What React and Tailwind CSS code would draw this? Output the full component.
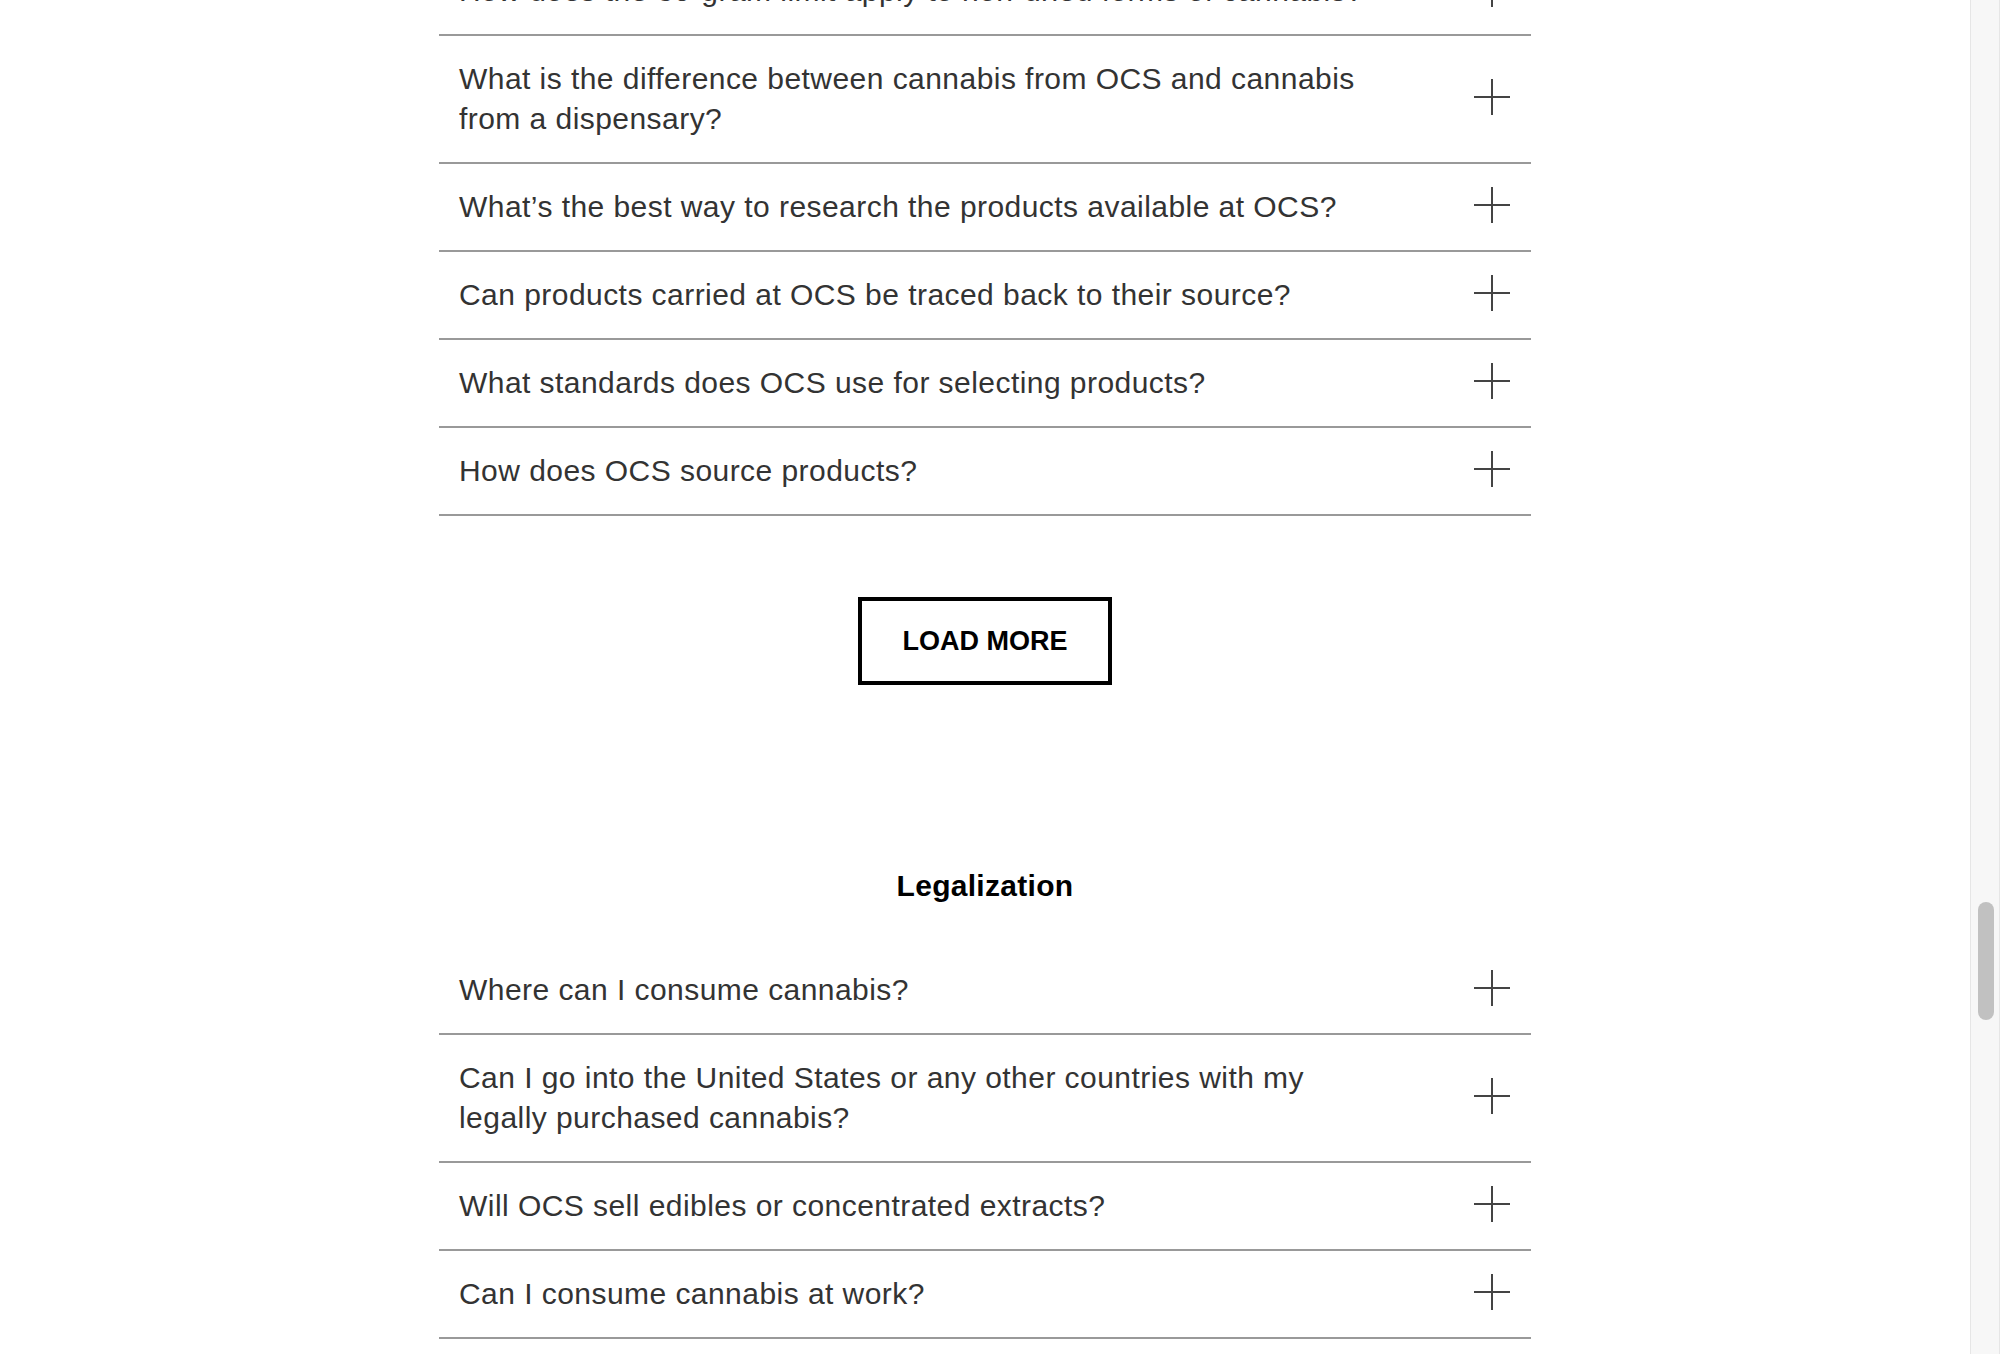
const firstGroup = [
  "How does the 30-gram limit apply to non-dried forms of cannabis?",
  "What is the difference between cannabis from OCS and cannabis from a dispensary?",
  "What\u2019s the best way to research the products available at OCS?",
  "Can products carried at OCS be traced back to their source?",
  "What standards does OCS use for selecting products?",
  "How does OCS source products?",
];

const legalization = [
  "Where can I consume cannabis?",
  "Can I go into the United States or any other countries with my legally purchased cannabis?",
  "Will OCS sell edibles or concentrated extracts?",
  "Can I consume cannabis at work?",
];

const PlusIcon = () => (
  <svg width="36" height="36" viewBox="0 0 36 36" className="shrink-0 -mt-[5px]">
    <line x1="0" y1="18" x2="36" y2="18" stroke="#444" strokeWidth="2" />
    <line x1="18" y1="0" x2="18" y2="36" stroke="#444" strokeWidth="2" />
  </svg>
);

const FaqRow = ({ question }) => (
  <div className="flex items-center justify-between border-b-2 border-[#999] pl-5 pr-[21px] py-[23px]">
    <p className="max-w-[910px] text-[30px] leading-[40px] tracking-[0.45px] text-[#333]">{question}</p>
    <PlusIcon />
  </div>
);

const App = () => {
  return (
    <div
      className="flex h-[1354px] w-full overflow-hidden bg-white"
      style={{ fontFamily: '"Liberation Sans", Arial, sans-serif' }}
    >
      <div className="flex-1">
        <div className="mx-auto w-[1092px]">
          {/* Products section (scrolled) */}
          <div className="-mt-[52px]">
            {firstGroup.map((q) => (
              <FaqRow key={q} question={q} />
            ))}
          </div>

          <div className="mt-[81px] flex justify-center">
            <button className="flex h-[88px] w-[254px] items-center justify-center border-4 border-black text-[27px] font-bold text-black">
              LOAD MORE
            </button>
          </div>

          {/* Legalization */}
          <h2 className="mt-[183px] text-center text-[30px] font-bold leading-[36px] tracking-[0.3px] text-black">
            Legalization
          </h2>
          <div className="mt-[43px]">
            {legalization.map((q) => (
              <FaqRow key={q} question={q} />
            ))}
          </div>
        </div>
      </div>

      {/* Scrollbar */}
      <div className="flex w-[30px] flex-col border-l border-r border-[#e6e6e6] bg-[#f7f7f7]">
        <div className="ml-[7px] mt-[902px] h-[118px] w-[16px] rounded-full bg-[#c1c1c1]" />
      </div>
    </div>
  );
};

export default App;
